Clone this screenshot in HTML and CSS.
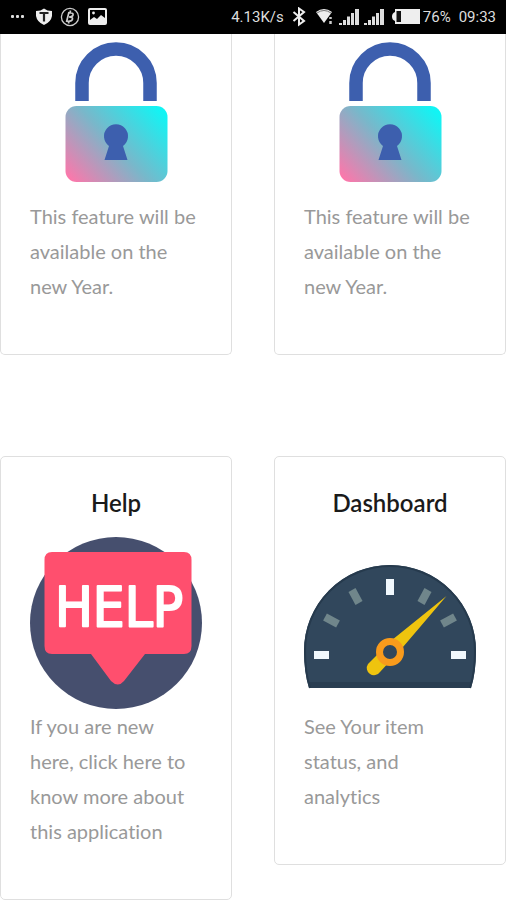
FILE: index.html
```
<!DOCTYPE html>
<html lang="en">

<head>
  <meta charset="UTF-8">
  <meta name="viewport" content="width=device-width, initial-scale=1.0">
  <title>Home</title>
  <link rel="stylesheet" href="styles.css">
</head>

<body>
  <header class="status">
    <div class="status-group notices">
      <svg width="16" height="20" viewBox="0 0 16 20" fill="#ddd">
        <rect x="1" y="8" width="3" height="3" rx="1" />
        <rect x="6" y="8" width="3" height="3" rx="1" />
        <rect x="11" y="8" width="3" height="3" rx="1" />
      </svg>
      <svg width="16" height="20" viewBox="0 0 16 20">
        <path d="M8 1.5Q11 4 16 4V9Q15 15 8 18Q1 15 0 9V4Q5 4 8 1.5Z" fill="#eee" />
        <path d="M3.5 6H12.5M8 6V14.500" stroke="#222" stroke-width="2.200" fill="none" />
      </svg>
      <svg width="20" height="20" viewBox="0 0 20 20" fill="none" stroke="#ccc">
        <circle cx="10" cy="10" r="8.600" stroke-width="1.300" />
        <path d="M9 5L6.500 15M8 6H11Q13.500 6 13 8Q12.500 10 9 10Q13 10 12.500 12Q12 14.500 7 14.200M10.500 3.500L10 6M9 14L8.500 16.500" stroke-width="1.700" />
      </svg>
      <svg width="19" height="20" viewBox="0 0 19 20">
        <rect x="1" y="2" width="17" height="15" rx="1" fill="none" stroke="#eee" stroke-width="2" />
        <path d="M2 16V13L6 10L9 12L13 8L17 11V16Z" fill="#eee" />
        <circle cx="5.500" cy="6" r="1.400" fill="#eee" />
      </svg>
    </div>
    <div class="status-group">
      <span>4.13K/s</span>
      <svg class="bluetooth" width="14" height="20" viewBox="0 0 14 20" fill="none" stroke="#eee" stroke-width="2">
        <path d="M1.500 5L12 14L7 17.500V1.500L12 5L1.500 14" />
      </svg>
      <svg class="wifi" width="18" height="20" viewBox="0 0 18 20">
        <path d="M0 5Q8 -1 16 5L8 16Z" fill="#eee" />
        <path d="M1 6Q8 1 15 6" fill="none" stroke="#777" />
        <path d="M14.500 10V12M14.500 14V17" fill="none" stroke="#ccc" stroke-width="2.500" />
      </svg>
      <svg class="signal" width="20" height="20" viewBox="0 0 20 20" fill="#ddd">
        <path d="M0 18V16H3V18ZM4 18V13H7V18ZM8 18V9.500H11V18ZM12 18V6H15V18ZM16 18V2H20V18Z" />
      </svg>
      <svg class="signal" width="20" height="20" viewBox="0 0 20 20" fill="#ddd">
        <path d="M0 18V16H3V18ZM4 18V13H7V18ZM8 18V9.500H11V18ZM12 18V6H15V18ZM16 18V2H20V18Z" />
      </svg>
      <svg class="battery" width="28" height="20" viewBox="0 0 28 20">
        <path d="M3 2H28V17H3V14Q0 13 0 9.500Q0 6 3 5Z" fill="#eee" />
        <rect x="4.500" y="4" width="4.500" height="11" fill="#111" />
      </svg>
      <span>76%</span>
      <span class="clock">09:33</span>
    </div>
  </header>

  <svg class="defs" width="0" height="0">
    <defs>
      <linearGradient id="lock-fill" gradientUnits="userSpaceOnUse" x1="46" y1="154" x2="130" y2="76">
        <stop offset="0" stop-color="#ff76aa" />
        <stop offset="0.500" stop-color="#79b7ca" />
        <stop offset="1" stop-color="#12f4f4" />
      </linearGradient>
      <symbol id="lock" viewBox="0 0 172 165">
        <path d="M52 67V49a34 34 0 0 1 68 0V67" fill="none" stroke="#3d5fae" stroke-width="13.500" />
        <rect x="35.500" y="72" width="102" height="76" rx="11" fill="url(#lock-fill)" />
        <path d="M74.500 126L79 112A12 12 0 1 1 93 112L97.500 126Z" fill="#3d5fae" />
      </symbol>
    </defs>
  </svg>

  <main class="cards">
    <section class="card card-cut">
      <svg class="picture" viewBox="0 0 172 165"><use href="#lock" /></svg>
      <p class="text">This feature will be available on the new Year.</p>
    </section>

    <section class="card card-cut">
      <svg class="picture" viewBox="0 0 172 165"><use href="#lock" /></svg>
      <p class="text">This feature will be available on the new Year.</p>
    </section>

    <section class="card">
      <h2 class="title">Help</h2>
      <svg class="picture" viewBox="0 0 172 172">
        <circle cx="86" cy="86" r="86" fill="#464f6e" />
        <path d="M22 15H154Q161.500 15 161.500 23V109Q161.500 117 154 117H115L94 144Q88 151 81 144L61 117H22Q14.500 117 14.500 109V23Q14.500 15 22 15Z" fill="#ff4f6e" />
        <text class="bubble-text" x="89" y="89" text-anchor="middle">HELP</text>
      </svg>
      <p class="text">If you are new here, click here to know more about this application</p>
    </section>

    <section class="card">
      <h2 class="title">Dashboard</h2>
      <svg class="picture" viewBox="0 0 172 172">
        <path d="M5 151Q0 135 0 114A86 86 0 0 1 172 114Q172 135 167 151Z" fill="#31475c" />
        <path d="M5 148H167" stroke="#2a3e52" stroke-width="6" />
        <path d="M6 151Q1 135 1 114A85 85 0 0 1 171 114Q171 135 166 151" fill="none" stroke="#263a4d" stroke-width="2" />
        <g fill="#f1f8fd">
          <rect x="82" y="42" width="8" height="16" />
          <rect x="10" y="114" width="15" height="8" />
          <rect x="147" y="114" width="15" height="8" />
        </g>
        <g stroke="#70868b" stroke-width="8">
          <path d="M48 53L55 66" />
          <path d="M124 53L117 66" />
          <path d="M21 80L34 87" />
          <path d="M151 80L138 87" />
        </g>
        <path d="M142.500 59L99 110L76 135A7 7 0 0 1 64 127L88 103Z" fill="#efc40e" />
        <circle cx="86" cy="115" r="10.500" fill="#31475c" stroke="#f99b1c" stroke-width="7" />
      </svg>
      <p class="text">See Your item status, and analytics</p>
    </section>
  </main>
</body>

</html>
```
FILE: styles.css
```
* {
  padding: 0;
  margin: 0;
  box-sizing: border-box;
}

body {
  background-color: #fff;
  font-family: Lato, "Open Sans", sans-serif;
  font-variant-ligatures: none;
}

.status {
  display: flex;
  justify-content: space-between;
  align-items: center;
  height: 34px;
  padding: 0 10px;
  background-color: #000;
  color: #ddd;
  font-family: Roboto, sans-serif;
  font-size: 15px;
}

.status-group {
  display: flex;
  align-items: center;
}

.notices {
  gap: 10px;
}

.notices svg:nth-child(3) {
  margin: 0 -2px;
}

.bluetooth {
  margin-left: 8px;
}

.wifi {
  margin-left: 10px;
}

.signal {
  margin-left: 5px;
}

.battery {
  margin: 0 3px 0 8px;
}

.clock {
  margin-left: 8px;
}

.defs {
  display: block;
}

.cards {
  display: grid;
  grid-template-columns: 1fr 1fr;
  gap: 101px 42px;
  align-items: start;
}

.card {
  padding: 29px 29px 50px;
  border: 1px solid #dfdfdf;
  border-radius: 5px;
}

.card-cut {
  padding-top: 0;
  border-top: none;
  border-radius: 0 0 5px 5px;
}

.title {
  margin-bottom: 17px;
  color: #1a1a1a;
  font-size: 24px;
  font-weight: 600;
  line-height: 34px;
  text-align: center;
}

.picture {
  display: block;
  width: 100%;
}

.bubble-text {
  fill: #fff;
  stroke: #fff;
  stroke-width: 2px;
  stroke-linejoin: round;
  font-family: "Liberation Sans Narrow", "DejaVu Sans Condensed", sans-serif;
  font-size: 56px;
}

.text {
  color: #999;
  font-size: 20px;
  line-height: 35px;
}
```
